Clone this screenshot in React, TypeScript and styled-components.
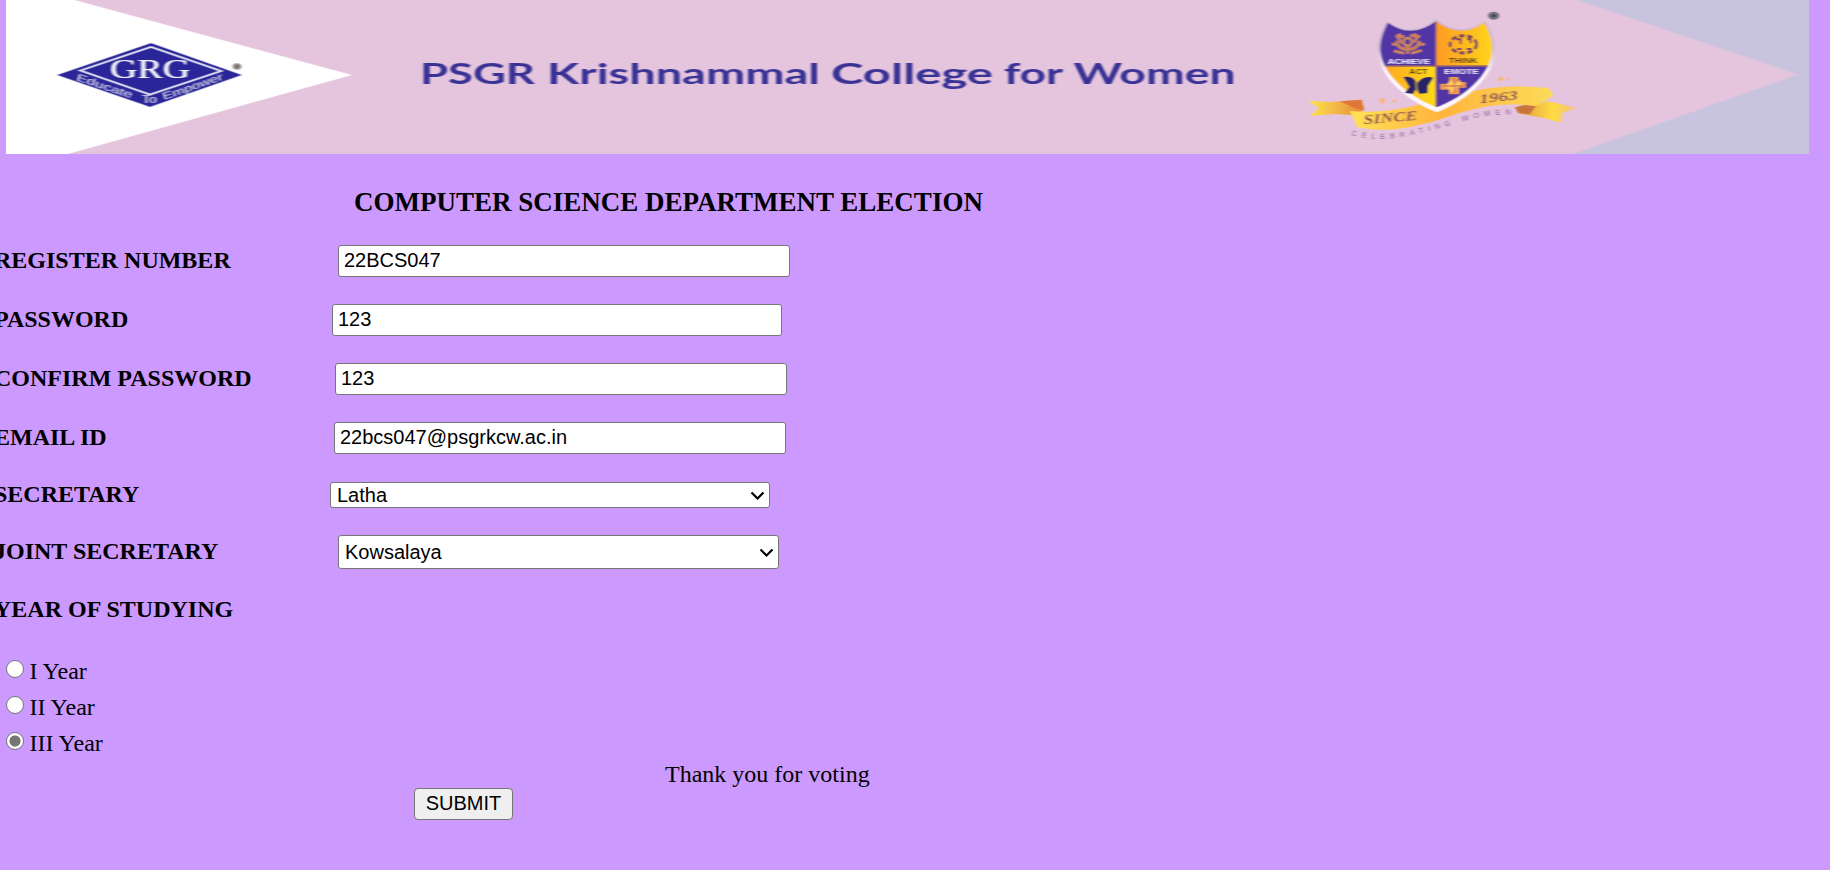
import React, { useState } from "react";
import styled, { createGlobalStyle } from "styled-components";

const GlobalStyle = createGlobalStyle`
  html, body { margin: 0; background: #cc99ff; overflow: hidden; }
  body { font-family: "Liberation Serif", "Times New Roman", serif; font-size: 24px; color: #000; }
`;

const Page = styled.main`
  box-sizing: border-box;
  height: 870px;
  padding-left: 6px;
  overflow: hidden;
`;

const Banner = styled.svg`
  display: block;
  width: 1803px;
  height: 154px;
`;

const Heading = styled.h1`
  margin: 33px 0 27px 348px;
  font-size: 27px;
  line-height: 31px;
  font-weight: bold;
  white-space: nowrap;
`;

const Form = styled.form`
  display: flex;
  flex-direction: column;
  align-items: flex-start;
`;

const Row = styled.div<{ $gap: number }>`
  display: flex;
  align-items: center;
  margin: 0 0 ${(p) => p.$gap}px -12px;
`;

const Label = styled.label<{ $width: number }>`
  width: ${(p) => p.$width}px;
  margin-bottom: 2px;
  font-weight: bold;
  line-height: 26px;
  white-space: nowrap;
`;

const TextInput = styled.input<{ $width: number }>`
  box-sizing: border-box;
  width: ${(p) => p.$width}px;
  height: 32px;
  margin: 0;
  padding: 0 5px 2px;
  border: 1px solid #767676;
  border-radius: 3px;
  background: #fff;
  color: #000;
  font: 20px "Liberation Sans", Arial, sans-serif;
  outline: none;
`;

const SelectWrap = styled.div`
  position: relative;
  display: flex;
`;

const Select = styled.select<{ $width: number; $height: number }>`
  appearance: none;
  box-sizing: border-box;
  width: ${(p) => p.$width}px;
  height: ${(p) => p.$height}px;
  margin: 0;
  padding: 0 24px 0 6px;
  border: 1px solid #767676;
  border-radius: 3px;
  background: #fff;
  color: #000;
  font: 20px "Liberation Sans", Arial, sans-serif;
`;

const Chevron = styled.svg`
  position: absolute;
  right: 5px;
  top: 50%;
  width: 15px;
  height: 10px;
  margin-top: -4px;
  pointer-events: none;
`;

const GroupTitle = styled.div`
  margin: -1px 0 30px -12px;
  font-weight: bold;
  line-height: 27px;
`;

const RadioRow = styled.label`
  display: flex;
  align-items: center;
  height: 36px;
  line-height: 27px;
`;

const Radio = styled.input`
  appearance: none;
  box-sizing: border-box;
  width: 18px;
  height: 18px;
  margin: 0 5.5px 4px 0;
  border: 1.5px solid #767676;
  border-radius: 50%;
  background: #fff;
  &:checked {
    background: radial-gradient(circle, #767676 0 5.2px, #fff 5.9px);
  }
`;

const Message = styled.p`
  margin: 0 0 0 659px;
  line-height: 27px;
`;

const SubmitButton = styled.button`
  box-sizing: border-box;
  width: 99px;
  height: 32px;
  margin: 0 0 0 408px;
  padding: 0 0 1px;
  border: 1px solid #767676;
  border-radius: 4px;
  background: #efefef;
  color: #000;
  font: 20px "Liberation Sans", Arial, sans-serif;
`;

function GrgLogo() {
  return (
    <g>
      <path d="M57 75 151 43 242 75 150 107Z" fill="#29269a" />
      <path d="M80.500 70.500 151 47 221 71 150 94.500Z" fill="none" stroke="#e8e7fa" strokeWidth="1.800" />
      <text x="110" y="77.500" textLength="80" lengthAdjust="spacingAndGlyphs" fontSize="27" fill="#f4f3ff">GRG</text>
      <g fill="#d3d1f2" fontFamily="Liberation Sans, sans-serif" fontSize="10">
        <text transform="translate(76 80) rotate(18.500)" textLength="58" lengthAdjust="spacingAndGlyphs">Educate</text>
        <text x="142" y="103" textLength="15" lengthAdjust="spacingAndGlyphs">To</text>
        <text transform="translate(164 100) rotate(-19)" textLength="63" lengthAdjust="spacingAndGlyphs">Empower</text>
      </g>
      <ellipse cx="237" cy="66.500" rx="4.500" ry="3.200" fill="#99918d" />
      <ellipse cx="237" cy="66.500" rx="2" ry="1.300" fill="#6c625e" />
    </g>
  );
}

function CollegeCrest() {
  return (
    <g transform="translate(1290 0) scale(.333333)">
      <path d="M55 302 120 306 210 300 222 330 195 346 135 342 60 348 86 325Z" fill="url(#tail)" />
      <path d="M675 322 735 315 775 304 860 324 818 338 812 368 765 355 685 340Z" fill="url(#tailRight)" />
      <path d="M180 333C270 342 350 325 440 300S620 248 775 264L790 286 765 303 735 318C620 305 560 323 475 350S300 402 202 382Z" fill="url(#ribbon)" />
      <path d="M675 322 705 315 737 319 720 343 685 339Z" fill="#c8743b" />
      <path d="M150 304 215 299 223 329 198 326Z" fill="#de7838" />

      <path d="M291 63Q365 116 438 58Q510 116 586 63C602 88 615 122 614 153C613 229 535 300 440 337C343 298 266 228 264 153C264 122 275 88 291 63Z" fill="url(#rim)" />
      <g clipPath="url(#shield)">
        <path d="M250 40H438V198H250Z" fill="#5134a5" />
        <path d="M438 40H630V198H438Z" fill="url(#gold)" />
        <path d="M250 198H438V340H250Z" fill="url(#gold)" />
        <path d="M438 198H630V340H438Z" fill="#5134a5" />
        <path d="M438 50V330M260 198H620" stroke="#9c6869" strokeWidth="4" />
      </g>

      <g stroke="#c9805f" strokeWidth="9" fill="none">
        <path d="M353 162V132M353 148Q322 148 320 122M353 148Q386 148 388 122M336 130 324 112 343 109M371 128 383 110 361 106M343 160 312 153M363 160 395 151" />
        <circle cx="353" cy="126" r="12" />
        <path d="M306 133H326M380 133H404M318 110 333 102M371 102 389 112" />
      </g>
      <g fill="none" stroke="#7b4560" strokeWidth="9">
        <ellipse cx="520" cy="133" rx="40" ry="26" strokeDasharray="16 8" />
        <path d="M498 118H512V132M531 118H542V130M501 147H515M530 147H545" strokeWidth="6" />
      </g>
      <path d="M340 231Q373 226 381 250Q399 225 430 233L414 257 413 279 387 281 380 263 370 281 344 279 358 260Z" fill="#272466" />
      <path d="M378 244 381 275" stroke="#b79b43" strokeWidth="5" />
      <g fill="#ef9d4d">
        <path d="M478 231H505V246H527V263H507V283H477V269H451V251H478Z" />
        <path d="M481 240 496 252 511 239 514 257 498 263 490 279 477 267 466 260Z" fill="#ffcc61" />
        <path d="M493 235V279M460 258H520" stroke="#bc5b60" strokeWidth="3" />
      </g>
      <g fontFamily="Liberation Sans, sans-serif" fontWeight="bold" fontSize="20">
        <text x="293" y="191" textLength="127" lengthAdjust="spacingAndGlyphs" fill="#eee6ff">ACHIEVE</text>
        <text x="476" y="190" textLength="87" lengthAdjust="spacingAndGlyphs" fill="#55391f">THINK</text>
        <text x="357" y="221" textLength="56" lengthAdjust="spacingAndGlyphs" fill="#55391f">ACT</text>
        <text x="463" y="221" textLength="103" lengthAdjust="spacingAndGlyphs" fill="#e9def8">EMOTE</text>
      </g>
      <g fill="#8b4f57" fontFamily="Liberation Serif, serif" fontWeight="bold">
        <text transform="translate(221 373) rotate(-5)" textLength="163" lengthAdjust="spacingAndGlyphs" fontSize="40" fontStyle="italic">SINCE</text>
        <text transform="translate(569 310) rotate(-6)" textLength="116" lengthAdjust="spacingAndGlyphs" fontSize="38" fontStyle="italic">1963</text>
      </g>
      <path id="motto" d="M184 405C275 431 360 409 445 386S570 342 672 343" fill="none" />
      <text fill="#8d629b" fontFamily="Liberation Sans, sans-serif" fontSize="22">
        <textPath href="#motto" textLength="488" lengthAdjust="spacing">CELEBRATING WOMEN</textPath>
      </text>
      <g fill="#f7b579">
        <circle cx="277" cy="302" r="8" /><circle cx="313" cy="303" r="5" />
        <circle cx="632" cy="237" r="7" /><circle cx="653" cy="236" r="4" />
      </g>
      <ellipse cx="611" cy="47" rx="17" ry="12" fill="#77727c" />
      <ellipse cx="611" cy="47" rx="8" ry="5" fill="#454851" />
    </g>
  );
}

const nameWords = [
  { word: "PSGR", x: 420, width: 115 },
  { word: "Krishnammal", x: 547, width: 273 },
  { word: "College", x: 831, width: 162 },
  { word: "for", x: 1004, width: 59 },
  { word: "Women", x: 1073.5, width: 162 },
];

function CollegeBanner() {
  return (
    <Banner viewBox="6 0 1803 154" role="img" aria-label="PSGR Krishnammal College for Women">
      <defs>
        <filter id="soft" x="-5%" y="-10%" width="110%" height="120%"><feGaussianBlur stdDeviation="1.1 .75" /></filter>
        <linearGradient id="gold"><stop stopColor="#ff9b24" /><stop offset="1" stopColor="#ffdc18" /></linearGradient>
        <linearGradient id="rim" x2="0" y2="1"><stop offset=".3" stopColor="#cdb6cf" /><stop offset=".55" stopColor="#fdf6fd" /></linearGradient>
        <linearGradient id="ribbon"><stop stopColor="#ffe356" /><stop offset=".45" stopColor="#ffb43d" /><stop offset="1" stopColor="#fcdb58" /></linearGradient>
        <linearGradient id="tail"><stop stopColor="#ffe64e" /><stop offset="1" stopColor="#e6873d" /></linearGradient>
        <linearGradient id="tailRight"><stop stopColor="#df914b" /><stop offset=".6" stopColor="#ffdb40" /><stop offset="1" stopColor="#f4bf83" /></linearGradient>
        <clipPath id="shield"><path d="M294 68Q365 119 438 64Q510 119 582 68C599 95 608 123 607 151C602 225 525 291 440 322C350 287 276 221 271 151C270 123 280 94 294 68Z" /></clipPath>
      </defs>
      <path d="M6 0H1809V154H6Z" fill="#e5c4de" />
      <g filter="url(#soft)">
        <path d="M0-5H56L352 75 50 159H0Z" fill="#fff" />
        <path d="M1577 0 1798 74.500 1573 154V160H1815V-6H1577Z" fill="#c8c4e0" />
        <GrgLogo />
        <g fontFamily="Lato, sans-serif" fontSize="29" fontWeight="700" fill="#393194">
          {nameWords.map((w) => (
            <text key={w.word} x={w.x} y="83.500" textLength={w.width} lengthAdjust="spacingAndGlyphs">{w.word}</text>
          ))}
        </g>
        <CollegeCrest />
      </g>
    </Banner>
  );
}

const textFields = [
  { id: "register", label: "REGISTER NUMBER", value: "22BCS047", offset: 344, width: 452, gap: 27 },
  { id: "password", label: "PASSWORD", value: "123", offset: 338, width: 450, gap: 27 },
  { id: "confirm", label: "CONFIRM PASSWORD", value: "123", offset: 341, width: 452, gap: 27 },
  { id: "email", label: "EMAIL ID", value: "22bcs047@psgrkcw.ac.in", offset: 340, width: 452, gap: 27 },
];

const selectFields = [
  { id: "secretary", label: "SECRETARY", value: "Latha", offset: 336, width: 440, height: 26, gap: 26 },
  { id: "joint", label: "JOINT SECRETARY", value: "Kowsalaya", offset: 344, width: 441, height: 34, gap: 28 },
];

export default function App() {
  const [year, setYear] = useState("III Year");
  return (
    <>
      <GlobalStyle />
      <Page>
        <CollegeBanner />
        <Heading>COMPUTER SCIENCE DEPARTMENT ELECTION</Heading>
        <Form onSubmit={(e) => e.preventDefault()}>
          {textFields.map((f) => (
            <Row key={f.id} $gap={f.gap}>
              <Label htmlFor={f.id} $width={f.offset}>{f.label}</Label>
              <TextInput id={f.id} defaultValue={f.value} $width={f.width} />
            </Row>
          ))}
          {selectFields.map((f) => (
            <Row key={f.id} $gap={f.gap}>
              <Label htmlFor={f.id} $width={f.offset}>{f.label}</Label>
              <SelectWrap>
                <Select id={f.id} defaultValue={f.value} $width={f.width} $height={f.height}>
                  <option>{f.value}</option>
                </Select>
                <Chevron viewBox="0 0 15 10">
                  <path d="M1.500 1.500 7.500 7.500 13.500 1.500" fill="none" stroke="#000" strokeWidth="2.200" />
                </Chevron>
              </SelectWrap>
            </Row>
          ))}
          <GroupTitle>YEAR OF STUDYING</GroupTitle>
          {["I Year", "II Year", "III Year"].map((y) => (
            <RadioRow key={y}>
              <Radio type="radio" name="year" checked={year === y} onChange={() => setYear(y)} />
              {y}
            </RadioRow>
          ))}
          <Message>Thank you for voting</Message>
          <SubmitButton type="submit">SUBMIT</SubmitButton>
        </Form>
      </Page>
    </>
  );
}
